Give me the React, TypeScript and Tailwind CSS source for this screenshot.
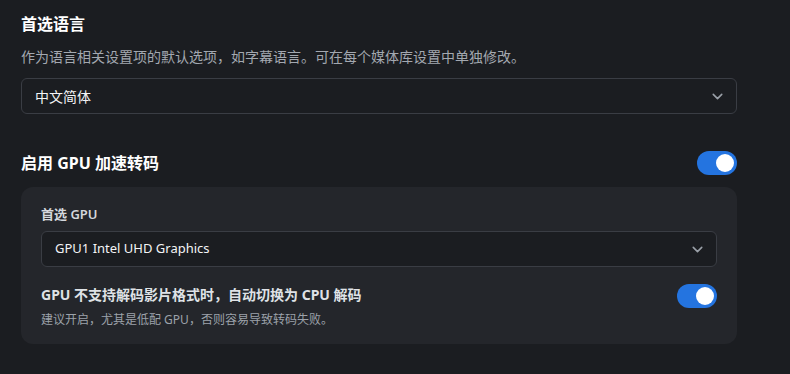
import { ChevronDown } from 'lucide-react'

const FONT = 'font-["Segoe_UI","Noto_Sans","Noto_Sans_CJK_SC",sans-serif]'

/* ─── Select ─────────────────────────────────────────────── */
function Select({ value, textSize = 'text-[13px]' }: { value: string; textSize?: string }) {
  return (
    <div className="flex h-[36px] items-center justify-between rounded-[6px] border border-[#3a3d44] bg-[#1b1d21] pl-[13px] pr-[10px]">
      <span className={`${textSize} text-[#f3f4f6]`}>{value}</span>
      <ChevronDown size={17} strokeWidth={2.2} className="text-[#9aa0a8]" />
    </div>
  )
}

/* ─── Toggle ─────────────────────────────────────────────── */
function Toggle() {
  return (
    <div className="flex h-[24px] w-[40px] shrink-0 items-center justify-end rounded-full bg-[#2474e0] pr-[3px]">
      <span className="h-[18px] w-[18px] rounded-full bg-white" />
    </div>
  )
}

export default function App() {
  return (
    <div className={`${FONT} min-h-[374px] w-[790px] bg-[#1b1d21] px-[21px] pt-[10px]`}>
      <div className="w-[716px]">
        {/* 首选语言 */}
        <h2 className="text-[16px] font-bold leading-[28px] text-white">首选语言</h2>
        <p className="mt-[10px] text-[14px] leading-[18px] text-[#a3a8b0]">
          作为语言相关设置项的默认选项，如字幕语言。可在每个媒体库设置中单独修改。
        </p>
        <div className="mt-[12px]">
          <Select value="中文简体" textSize="text-[14px]" />
        </div>

        {/* GPU */}
        <div className="mt-[36px] flex items-center justify-between">
          <h2 className="text-[16px] font-bold leading-[26px] text-white">启用 GPU 加速转码</h2>
          <Toggle />
        </div>

        <div className="mt-[11px] rounded-[12px] bg-[#24262b] px-[20px] pb-[15px] pt-[17px]">
          <div className="text-[13px] font-semibold leading-[20px] text-[#d4d7dc]">首选 GPU</div>
          <div className="mt-[7px]">
            <Select value="GPU1 Intel UHD Graphics" />
          </div>

          <div className="mt-[18px] flex items-center justify-between">
            <div>
              <div className="text-[14px] font-bold leading-[20px] text-[#dfe2e6]">
                GPU 不支持解码影片格式时，自动切换为 CPU 解码
              </div>
              <div className="mt-[6px] text-[12px] leading-[18px] text-[#9ca2aa]">
                建议开启，尤其是低配 GPU，否则容易导致转码失败。
              </div>
            </div>
            <div className="-mt-[22px]">
              <Toggle />
            </div>
          </div>
        </div>
      </div>
    </div>
  )
}
